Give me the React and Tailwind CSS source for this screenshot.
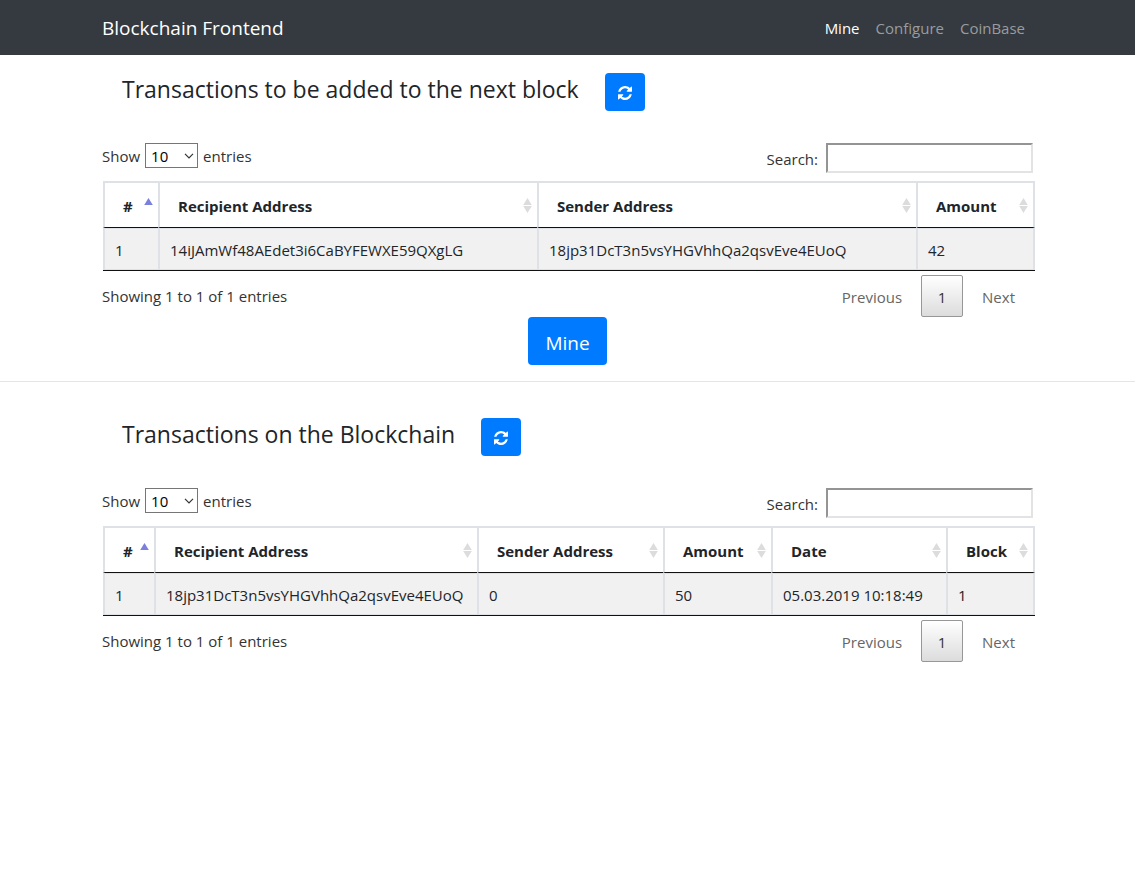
const pending = {
  id: "pending",
  columns: [
    { label: "#", width: "w-[55px]" },
    { label: "Recipient Address", width: "w-[379px]" },
    { label: "Sender Address", width: "w-[379px]" },
    { label: "Amount", width: "w-[119px]" },
  ],
  rows: [["1", "14iJAmWf48AEdet3i6CaBYFEWXE59QXgLG", "18jp31DcT3n5vsYHGVhhQa2qsvEve4EUoQ", "42"]],
};

const confirmed = {
  id: "confirmed",
  columns: [
    { label: "#", width: "w-[51px]" },
    { label: "Recipient Address", width: "w-[323px]" },
    { label: "Sender Address", width: "w-[186px]" },
    { label: "Amount", width: "w-[108px]" },
    { label: "Date", width: "w-[175px]" },
    { label: "Block", width: "w-[89px]" },
  ],
  rows: [["1", "18jp31DcT3n5vsYHGVhhQa2qsvEve4EUoQ", "0", "50", "05.03.2019 10:18:49", "1"]],
};

function RefreshIcon() {
  return (
    <svg viewBox="0 0 1536 1536" className="size-[14px]" fill="currentColor" aria-hidden="true">
      <path d="M1511 928q0 5-1 7-64 268-268 434.500t-478 166.500q-146 0-282.500-55t-243.500-157l-129 129q-19 19-45 19t-45-19-19-45v-448q0-26 19-45t45-19h448q26 0 45 19t19 45-19 45l-137 137q71 66 161 102t187 36q134 0 250-65t186-179q11-17 53-117 8-23 30-23h192q13 0 22.500 9.500t9.500 22.500zM1536 128v448q0 26-19 45t-45 19h-448q-26 0-45-19t-19-45 19-45l138-138q-148-137-349-137-134 0-250 65t-186 179q-11 17-53 117-8 23-30 23h-199q-13 0-22.500-9.500t-9.500-22.500v-7q65-268 270-434.500t480-166.500q146 0 284 55.500t245 156.500l130-129q19-19 45-19t45 19 19 45z" />
    </svg>
  );
}

function SortIcon({ active }) {
  return (
    <svg viewBox="0 0 9 15" className="h-[15px] w-[9px] shrink-0" aria-hidden="true">
      <path d="M4.5 0 L8.8 7 H0.2 Z" fill={active ? "#7b80dd" : "#dcdcdc"} />
      {!active && <path d="M4.5 15 L8.8 8 H0.2 Z" fill="#dcdcdc" />}
    </svg>
  );
}

function Container({ className = "", children }) {
  return <div className={`mx-auto w-full max-w-[963px] px-4 ${className}`}>{children}</div>;
}

function Heading({ children }) {
  return (
    <div className="flex items-start gap-[26px] pl-5">
      <h2 className="text-[23px] leading-8">{children}</h2>
      <button
        type="button"
        aria-label="Refresh"
        className="flex h-[38px] w-10 items-center justify-center rounded bg-[#007bff] pt-0.5 text-white"
      >
        <RefreshIcon />
      </button>
    </div>
  );
}

function DataTable({ table }) {
  return (
    <div className="text-[#333]">
      <div className="flex items-start justify-between">
        <label className="flex items-center gap-[5px]">
          Show
          <span className="relative flex">
            <select className="h-[25px] w-[53px] appearance-none border border-[#767676] bg-white pl-[5px] text-black">
              <option>10</option>
              <option>25</option>
              <option>50</option>
              <option>100</option>
            </select>
            <svg viewBox="0 0 10 6" className="pointer-events-none absolute top-[10px] right-1 h-[6px] w-[10px]" fill="none" stroke="#333" strokeWidth="1.2">
              <path d="M1 0.8 L5 4.8 L9 0.8" />
            </svg>
          </span>
          entries
        </label>
        <label className="flex items-center gap-2">
          <span className="pt-0.5">Search:</span>
          <input
            type="search"
            className="h-[30px] w-[207px] border-2 border-t-[#949494] border-r-[#e3e3e3] border-b-[#e3e3e3] border-l-[#949494] bg-white px-1 text-black outline-none"
          />
        </label>
      </div>

      <div className="mt-2 -mr-0.5 ml-px">
        <table className="w-full table-fixed border-separate border-spacing-0 border-b border-[#111] text-[#212529]">
          <thead>
            <tr>
              {table.columns.map((column, i) => (
                <th
                  key={column.label}
                  scope="col"
                  className={`${column.width} border-t-2 border-b border-l-2 border-t-[#dee2e6] border-r-[#dee2e6] border-b-[#111] border-l-[#dee2e6] p-0 font-bold last:border-r-2`}
                >
                  <button type="button" className="flex h-11 w-full items-center justify-between pr-[5px] pl-[18px] text-left">
                    <span className="pt-0.5">{column.label}</span>
                    <SortIcon active={i === 0} />
                  </button>
                </th>
              ))}
            </tr>
          </thead>
          <tbody>
            {table.rows.map((row) => (
              <tr key={row[0]}>
                {row.map((cell, i) => (
                  <td
                    key={i}
                    className="h-[42px] border-y border-l-2 border-[#dee2e6] bg-[#f1f1f1] py-0 pt-0.5 pl-[10px] whitespace-nowrap last:border-r-2"
                  >
                    {cell}
                  </td>
                ))}
              </tr>
            ))}
          </tbody>
        </table>
      </div>

      <div className="flex items-start justify-between pt-1">
        <p className="pt-[9px]">Showing 1 to 1 of 1 entries</p>
        <nav aria-label={`${table.id} pages`} className="flex items-center text-[#666]">
          <button type="button" className="h-[42px] px-[19px] pt-0.5">Previous</button>
          <button
            type="button"
            aria-current="page"
            className="h-[42px] w-[42px] rounded-xs border border-[#979797] bg-linear-to-b from-white to-[#dcdcdc] pt-0.5 text-[#333]"
          >
            1
          </button>
          <button type="button" className="h-[42px] pt-0.5 pr-[18px] pl-[19px]">Next</button>
        </nav>
      </div>
    </div>
  );
}

export default function App() {
  return (
    <div className="min-h-screen bg-white font-['Open_Sans',sans-serif] text-[15px] leading-6 text-[#212529]">
      <header className="bg-[#343a40]">
        <Container className="flex h-[55px] items-center justify-between">
          <a href="#" className="text-[19px] text-white">Blockchain Frontend</a>
          <nav aria-label="Main" className="flex gap-4 pr-2 text-[#999c9f]">
            <a href="#mine" className="text-white">Mine</a>
            <a href="#configure">Configure</a>
            <a href="#coinbase">CoinBase</a>
          </nav>
        </Container>
      </header>

      <main>
        <Container className="pt-[18px]">
          <Heading>Transactions to be added to the next block</Heading>
          <div className="pt-8">
            <DataTable table={pending} />
          </div>
          <div className="flex justify-center">
            <button type="button" className="h-12 rounded bg-[#007bff] px-[17px] pt-1 text-[19px] text-white">
              Mine
            </button>
          </div>
        </Container>
        <hr className="mt-4 border-t border-[#e5e5e5]" />
        <Container className="pt-9">
          <Heading>Transactions on the Blockchain</Heading>
          <div className="pt-8">
            <DataTable table={confirmed} />
          </div>
        </Container>
      </main>
    </div>
  );
}
